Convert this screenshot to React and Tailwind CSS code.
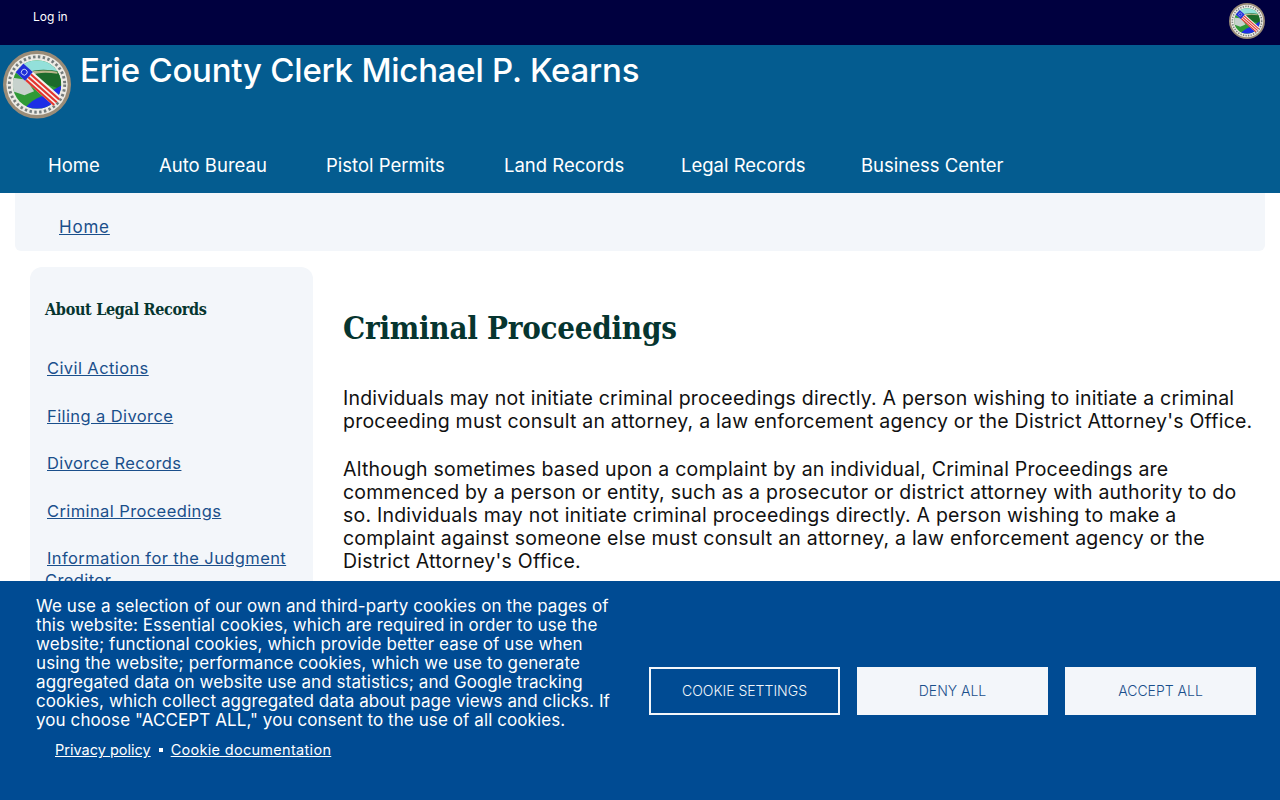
import React from 'react';

const sans = "font-['Inter','Liberation_Sans',sans-serif]";
const serif = "font-['DejaVu_Serif_Condensed','DejaVu_Serif',serif]";

function Seal({ className, id }) {
  return (
    <svg viewBox="0 0 70 70" className={className}>
      <defs>
        <clipPath id={id}><circle cx="35" cy="35" r="25" /></clipPath>
      </defs>
      <circle cx="35" cy="35" r="35" fill="#9a8c78" />
      <circle cx="35" cy="35" r="31.5" fill="#eceae4" />
      <circle cx="35" cy="35" r="28.5" fill="none" stroke="#4b5558" strokeWidth="3" strokeDasharray="2.5 2.5" opacity="0.75" />
      <circle cx="35" cy="35" r="25.5" fill="#f4f3ee" />
      <g clipPath={`url(#${id})`}>
        <rect x="10" y="10" width="50" height="50" fill="#2f9a37" />
        <rect x="10" y="10" width="50" height="13" fill="#93e0da" />
        <path d="M24 23 Q38 17 60 22 L60 40 L42 34 Z" fill="#1c6b2b" />
        <path d="M24 23 Q38 19 56 22 L56 24 Q38 21 28 26 Z" fill="#b9b58a" />
        <path d="M10 28 L24 30 L32 42 L22 46 L10 42 Z" fill="#c7d2cd" />
        <path d="M22 60 Q30 50 40 47 L60 36 L60 60 Z" fill="#1d2ee6" />
      </g>
      <g transform="translate(17 18) rotate(41.5)">
        <rect x="0" y="-6" width="52" height="12" fill="#f5f2ee" />
        <rect x="13" y="-3.9" width="39" height="2.2" fill="#e2352f" />
        <rect x="13" y="-0.1" width="39" height="2.2" fill="#e2352f" />
        <rect x="13" y="3.7" width="39" height="2.2" fill="#e2352f" />
        <rect x="0" y="-6" width="13" height="12" fill="#1f2fd8" />
        <circle cx="6.5" cy="0" r="3" fill="none" stroke="#e8f0ff" strokeWidth="0.8" />
      </g>
    </svg>
  );
}

const navItems = ['Home', 'Auto Bureau', 'Pistol Permits', 'Land Records', 'Legal Records', 'Business Center'];

const sideLinks = ['Civil Actions', 'Filing a Divorce', 'Divorce Records', 'Criminal Proceedings'];

export default function App() {
  return (
    <div className={`h-[800px] overflow-hidden bg-white ${sans}`}>
      {/* Top bar */}
      <div className="flex h-[45px] justify-between bg-[#00003f] pl-[33px] pr-[15px]">
        <a className="mt-[10px] text-[12px] leading-[14px] text-white">Log in</a>
        <Seal id="seal-small" className="mt-[3px] h-[36px] w-[36px]" />
      </div>

      {/* Header */}
      <header className="h-[148px] bg-[#045c90]">
        <div className="flex pl-[3px] pt-[5px]">
          <Seal id="seal-large" className="h-[69px] w-[68px]" />
          <h1 className="ml-[9px] text-[33px] font-medium leading-[40px] tracking-[-0.23px] text-white">Erie County Clerk Michael P. Kearns</h1>
        </div>
        <nav className="mt-[34px] grid grid-cols-[111px_167px_178px_177px_180px_auto] justify-start pl-[48px] text-[18.5px] leading-[24px] text-white">
          {navItems.map((item) => (
            <a key={item}>{item}</a>
          ))}
        </nav>
      </header>

      {/* Breadcrumb */}
      <div className="mx-[15px] h-[58px] rounded-b-[6px] bg-[#f3f6fa] pl-[44px] pt-[23px] text-[17px] leading-[22px] tracking-[0.8px] text-[#1a4f8b]">
        <a className="underline">Home</a>
      </div>

      <div className="flex pl-[30px] pt-[16px]">
        {/* Sidebar */}
        <aside className="h-[400px] w-[283px] shrink-0 rounded-[12px] bg-[#f3f6fa] pl-[15px] pt-[32px]">
          <h3 className={`${serif} text-[16px] font-bold leading-[22px] tracking-[-0.3px] text-[#06352f]`}>About Legal Records</h3>
          <ul className="mt-[36px] pl-[2px] text-[16.5px] leading-[22px] tracking-[0.4px] text-[#1a4f8b]">
            {sideLinks.map((link) => (
              <li key={link} className="mb-[25.5px]"><a className="underline">{link}</a></li>
            ))}
            <li className="-ml-[2px] indent-[2px]"><a className="underline">Information for the Judgment<br />Creditor</a></li>
          </ul>
        </aside>

        {/* Main content */}
        <main className="ml-[30px] whitespace-nowrap pt-[39px] text-[19.5px] leading-[23px] tracking-[0.22px] text-[#111]">
          <h1 className={`${serif} text-[31px] font-bold leading-[44px] tracking-[-0.25px] text-[#06352f]`}>Criminal Proceedings</h1>
          <p className="mt-[37px]">Individuals may not initiate criminal proceedings directly. A person wishing to initiate a criminal<br />proceeding must consult an attorney, a law enforcement agency or the District Attorney's Office.</p>
          <p className="mt-[25px]">Although sometimes based upon a complaint by an individual, Criminal Proceedings are<br />commenced by a person or entity, such as a prosecutor or district attorney with authority to do<br />so. Individuals may not initiate criminal proceedings directly. A person wishing to make a<br />complaint against someone else must consult an attorney, a law enforcement agency or the<br />District Attorney's Office.</p>
        </main>
      </div>

      {/* Cookie banner */}
      <div className="fixed inset-x-0 bottom-0 flex h-[219px] bg-[#004b93] pl-[36px] pr-[24px] text-white">
        <div className="w-[613px] shrink-0 whitespace-nowrap pt-[16px]">
          <p className="text-[17px] leading-[19px] tracking-[0.09px]">We use a selection of our own and third-party cookies on the pages of<br />this website: Essential cookies, which are required in order to use the<br />website; functional cookies, which provide better ease of use when<br />using the website; performance cookies, which we use to generate<br />aggregated data on website use and statistics; and Google tracking<br />cookies, which collect aggregated data about page views and clicks. If<br />you choose "ACCEPT ALL," you consent to the use of all cookies.</p>
          <div className="ml-[19px] mt-[10px] flex items-center text-[14.5px] leading-[20px]">
            <a className="underline">Privacy policy</a>
            <span className="mx-[8px] h-[4px] w-[4px] bg-white" />
            <a className="underline tracking-[0.3px]">Cookie documentation</a>
          </div>
        </div>
        <div className="flex flex-1 justify-end gap-[17px] pt-[86px] text-[14px] font-light">
          <button className="h-[48px] w-[191px] border-2 border-[#f3f6fa] pb-[1px] text-[#f3f6fa]">COOKIE SETTINGS</button>
          <button className="h-[48px] w-[191px] bg-[#f3f6fa] pb-[1px] text-[#1a4f8b]">DENY ALL</button>
          <button className="h-[48px] w-[191px] bg-[#f3f6fa] pb-[1px] text-[#1a4f8b]">ACCEPT ALL</button>
        </div>
      </div>
    </div>
  );
}
